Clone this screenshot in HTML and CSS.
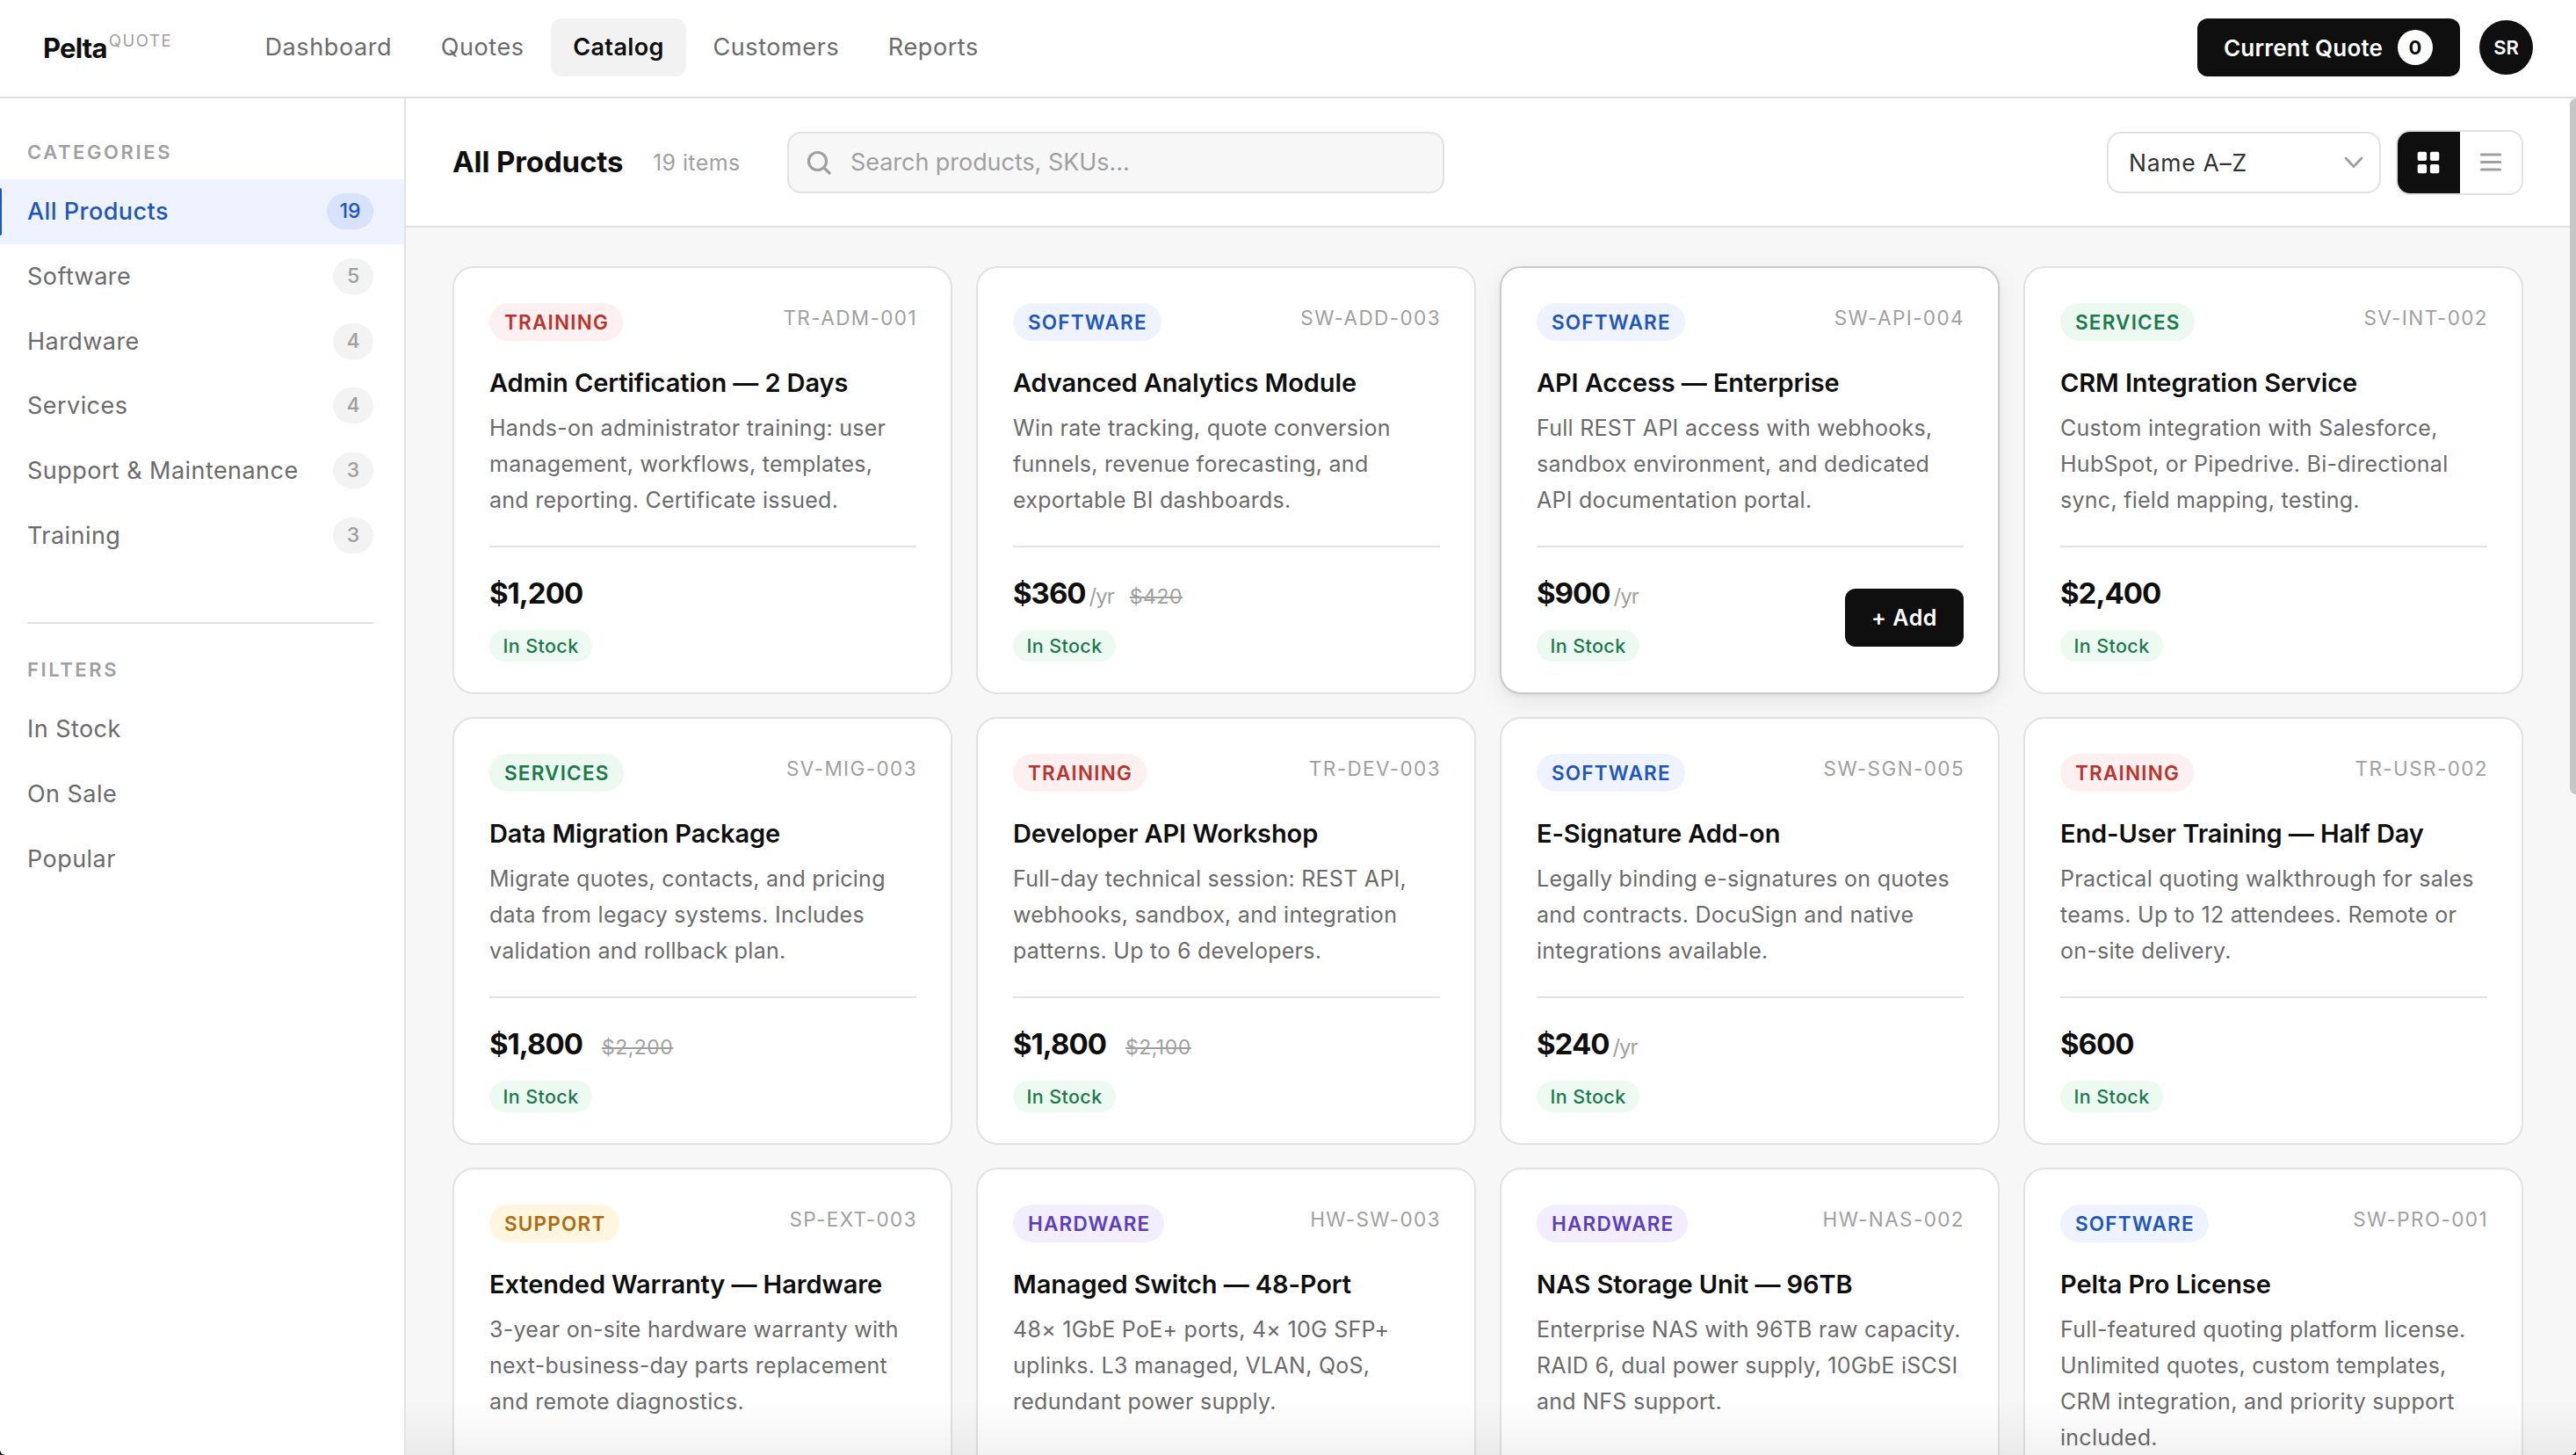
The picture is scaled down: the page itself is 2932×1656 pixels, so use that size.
FILE: index.html
```html
<!DOCTYPE html>
<html lang="en">
<head>
    <meta charset="UTF-8">
    <meta name="viewport" content="width=device-width, initial-scale=1.0">
    <title>Pelta Quote - Catalog</title>
    <link rel="stylesheet" href="styles.css">
</head>
<body>
    <div class="app">
        <header class="header">
            <div class="logo">Pelta<span class="logo-tag">QUOTE</span></div>
            <nav class="nav">
                <a class="nav-link">Dashboard</a>
                <a class="nav-link">Quotes</a>
                <a class="nav-link active">Catalog</a>
                <a class="nav-link">Customers</a>
                <a class="nav-link">Reports</a>
            </nav>
            <button class="quote-btn">Current Quote <span class="quote-count">0</span></button>
            <div class="avatar">SR</div>
        </header>

        <div class="layout">
            <aside class="sidebar">
                <h3 class="side-title">CATEGORIES</h3>
                <ul class="side-list">
                    <li class="side-item active">All Products <span class="count">19</span></li>
                    <li class="side-item">Software <span class="count">5</span></li>
                    <li class="side-item">Hardware <span class="count">4</span></li>
                    <li class="side-item">Services <span class="count">4</span></li>
                    <li class="side-item">Support &amp; Maintenance <span class="count">3</span></li>
                    <li class="side-item">Training <span class="count">3</span></li>
                </ul>
                <div class="side-divider"></div>
                <h3 class="side-title">FILTERS</h3>
                <ul class="side-list">
                    <li class="side-item">In Stock</li>
                    <li class="side-item">On Sale</li>
                    <li class="side-item">Popular</li>
                </ul>
            </aside>

            <main class="main">
                <div class="toolbar">
                    <h1 class="page-title">All Products</h1>
                    <span class="item-count">19 items</span>
                    <div class="search">
                        <svg class="search-icon" width="28" height="28" viewBox="0 0 28 28" fill="none" stroke="#a0a0a0" stroke-width="3.2" stroke-linecap="round">
                            <circle cx="12.5" cy="12.5" r="10"/>
                            <path d="M19.8 19.8L26 26"/>
                        </svg>
                        <span class="placeholder">Search products, SKUs...</span>
                    </div>
                    <div class="select">
                        <span>Name A–Z</span>
                        <svg width="22" height="14" viewBox="0 0 22 14" fill="none" stroke="#a0a0a0" stroke-width="2.8" stroke-linecap="round" stroke-linejoin="round">
                            <path d="M2 2L11 11.5L20 2"/>
                        </svg>
                    </div>
                    <div class="view-toggle">
                        <button class="view-btn active">
                            <svg width="26" height="26" viewBox="0 0 26 26" fill="#fff">
                                <rect x="0.7" y="0.7" width="10.4" height="10.4" rx="2"/>
                                <rect x="14.9" y="0.7" width="10.4" height="10.4" rx="2"/>
                                <rect x="0.7" y="14.9" width="10.4" height="10.4" rx="2"/>
                                <rect x="14.9" y="14.9" width="10.4" height="10.4" rx="2"/>
                            </svg>
                        </button>
                        <button class="view-btn">
                            <svg width="26" height="26" viewBox="0 0 26 26" stroke="#a0a0a0" stroke-width="3.2" stroke-linecap="round">
                                <path d="M2.4 4H23.6M2.4 12.5H23.6M2.4 21H23.6"/>
                            </svg>
                        </button>
                    </div>
                </div>

                <div class="grid">
                    <div class="card">
                        <div class="card-top"><span class="badge training">TRAINING</span><span class="sku">TR-ADM-001</span></div>
                        <h2 class="card-title">Admin Certification — 2 Days</h2>
                        <p class="card-desc">Hands-on administrator training: user management, workflows, templates, and reporting. Certificate issued.</p>
                        <div class="card-footer">
                            <div>
                                <div class="price-row"><span class="price">$1,200</span></div>
                                <span class="stock">In Stock</span>
                            </div>
                        </div>
                    </div>
                    <div class="card">
                        <div class="card-top"><span class="badge software">SOFTWARE</span><span class="sku">SW-ADD-003</span></div>
                        <h2 class="card-title">Advanced Analytics Module</h2>
                        <p class="card-desc">Win rate tracking, quote conversion funnels, revenue forecasting, and exportable BI dashboards.</p>
                        <div class="card-footer">
                            <div>
                                <div class="price-row"><span class="price">$360</span><span class="period">/yr</span><span class="old-price">$420</span></div>
                                <span class="stock">In Stock</span>
                            </div>
                        </div>
                    </div>
                    <div class="card hovered">
                        <div class="card-top"><span class="badge software">SOFTWARE</span><span class="sku">SW-API-004</span></div>
                        <h2 class="card-title">API Access — Enterprise</h2>
                        <p class="card-desc">Full REST API access with webhooks, sandbox environment, and dedicated API documentation portal.</p>
                        <div class="card-footer">
                            <div>
                                <div class="price-row"><span class="price">$900</span><span class="period">/yr</span></div>
                                <span class="stock">In Stock</span>
                            </div>
                            <button class="add-btn">+ Add</button>
                        </div>
                    </div>
                    <div class="card">
                        <div class="card-top"><span class="badge services">SERVICES</span><span class="sku">SV-INT-002</span></div>
                        <h2 class="card-title">CRM Integration Service</h2>
                        <p class="card-desc">Custom integration with Salesforce, HubSpot, or Pipedrive. Bi-directional sync, field mapping, testing.</p>
                        <div class="card-footer">
                            <div>
                                <div class="price-row"><span class="price">$2,400</span></div>
                                <span class="stock">In Stock</span>
                            </div>
                        </div>
                    </div>

                    <div class="card">
                        <div class="card-top"><span class="badge services">SERVICES</span><span class="sku">SV-MIG-003</span></div>
                        <h2 class="card-title">Data Migration Package</h2>
                        <p class="card-desc">Migrate quotes, contacts, and pricing data from legacy systems. Includes validation and rollback plan.</p>
                        <div class="card-footer">
                            <div>
                                <div class="price-row"><span class="price">$1,800</span><span class="old-price">$2,200</span></div>
                                <span class="stock">In Stock</span>
                            </div>
                        </div>
                    </div>
                    <div class="card">
                        <div class="card-top"><span class="badge training">TRAINING</span><span class="sku">TR-DEV-003</span></div>
                        <h2 class="card-title">Developer API Workshop</h2>
                        <p class="card-desc">Full-day technical session: REST API, webhooks, sandbox, and integration patterns. Up to 6 developers.</p>
                        <div class="card-footer">
                            <div>
                                <div class="price-row"><span class="price">$1,800</span><span class="old-price">$2,100</span></div>
                                <span class="stock">In Stock</span>
                            </div>
                        </div>
                    </div>
                    <div class="card">
                        <div class="card-top"><span class="badge software">SOFTWARE</span><span class="sku">SW-SGN-005</span></div>
                        <h2 class="card-title">E-Signature Add-on</h2>
                        <p class="card-desc">Legally binding e-signatures on quotes and contracts. DocuSign and native integrations available.</p>
                        <div class="card-footer">
                            <div>
                                <div class="price-row"><span class="price">$240</span><span class="period">/yr</span></div>
                                <span class="stock">In Stock</span>
                            </div>
                        </div>
                    </div>
                    <div class="card">
                        <div class="card-top"><span class="badge training">TRAINING</span><span class="sku">TR-USR-002</span></div>
                        <h2 class="card-title">End-User Training — Half Day</h2>
                        <p class="card-desc">Practical quoting walkthrough for sales teams. Up to 12 attendees. Remote or on-site delivery.</p>
                        <div class="card-footer">
                            <div>
                                <div class="price-row"><span class="price">$600</span></div>
                                <span class="stock">In Stock</span>
                            </div>
                        </div>
                    </div>

                    <div class="card">
                        <div class="card-top"><span class="badge support">SUPPORT</span><span class="sku">SP-EXT-003</span></div>
                        <h2 class="card-title">Extended Warranty — Hardware</h2>
                        <p class="card-desc">3-year on-site hardware warranty with next-business-day parts replacement and remote diagnostics.</p>
                    </div>
                    <div class="card">
                        <div class="card-top"><span class="badge hardware">HARDWARE</span><span class="sku">HW-SW-003</span></div>
                        <h2 class="card-title">Managed Switch — 48-Port</h2>
                        <p class="card-desc">48× 1GbE PoE+ ports, 4× 10G SFP+ uplinks. L3 managed, VLAN, QoS, redundant power supply.</p>
                    </div>
                    <div class="card">
                        <div class="card-top"><span class="badge hardware">HARDWARE</span><span class="sku">HW-NAS-002</span></div>
                        <h2 class="card-title">NAS Storage Unit — 96TB</h2>
                        <p class="card-desc">Enterprise NAS with 96TB raw capacity. RAID 6, dual power supply, 10GbE iSCSI and NFS support.</p>
                    </div>
                    <div class="card">
                        <div class="card-top"><span class="badge software">SOFTWARE</span><span class="sku">SW-PRO-001</span></div>
                        <h2 class="card-title">Pelta Pro License</h2>
                        <p class="card-desc">Full-featured quoting platform license. Unlimited quotes, custom templates, CRM integration, and priority support included.</p>
                    </div>
                </div>
                <div class="scrollbar"></div>
                <div class="fade"></div>
            </main>
        </div>
    </div>
</body>
</html>
```
FILE: styles.css
```css
* {
    box-sizing: border-box;
    margin: 0;
    padding: 0;
}
html {
    background: #111;
}
body {
    font-family: Inter, sans-serif;
    color: #0f0f0f;
}
button {
    font-family: inherit;
    border: none;
}
.app {
    display: flex;
    flex-direction: column;
    height: 1656px;
    background: #fff;
    border-radius: 0 0 6px 6px;
    overflow: hidden;
}

/* header */
.header {
    display: flex;
    align-items: center;
    flex: none;
    height: 112px;
    padding: 0 49px 2px 49px;
    border-bottom: 2px solid #e2e2e2;
}
.logo {
    display: flex;
    width: 227px;
    font-size: 31px;
    font-weight: 700;
    letter-spacing: -0.8px;
}
.logo-tag {
    margin-left: 2px;
    font-size: 18.5px;
    line-height: 20px;
    font-weight: 400;
    letter-spacing: 1.6px;
    color: #a0a0a0;
}
.nav {
    display: flex;
    gap: 5px;
    flex: 1;
}
.nav-link {
    padding: 0 25px 0 25.5px;
    font-size: 27px;
    line-height: 66px;
    letter-spacing: 0.6px;
    color: #6b6b6b;
    border-radius: 12px;
}
.nav-link.active {
    background: #f2f2f2;
    color: #0f0f0f;
    font-weight: 600;
    letter-spacing: 0.4px;
}
.quote-btn {
    display: flex;
    align-items: center;
    justify-content: space-between;
    width: 299px;
    height: 66px;
    padding: 0 31px 0 30px;
    background: #0f0f0f;
    border-radius: 12px;
    color: #fff;
    font-size: 26px;
    font-weight: 600;
    letter-spacing: 0.2px;
}
.quote-count {
    width: 40px;
    height: 40px;
    border-radius: 50%;
    background: #fff;
    color: #0f0f0f;
    font-size: 22px;
    font-weight: 700;
    line-height: 40px;
    text-align: center;
}
.avatar {
    width: 61px;
    height: 62px;
    margin-left: 22px;
    border-radius: 50%;
    background: #0f0f0f;
    color: #fff;
    font-size: 22px;
    font-weight: 600;
    line-height: 62px;
    text-align: center;
}

.layout {
    display: flex;
    flex: 1;
    min-height: 0;
}

/* sidebar */
.sidebar {
    flex: none;
    width: 462px;
    padding-top: 46px;
    border-right: 2px solid #e2e2e2;
}
.side-title {
    margin: 0 31px 16px;
    font-size: 22px;
    line-height: 30px;
    font-weight: 600;
    letter-spacing: 2.6px;
    color: #a0a0a0;
}
.side-list {
    list-style: none;
}
.side-item {
    display: flex;
    align-items: center;
    justify-content: space-between;
    height: 73.7px;
    padding: 0 35px 0 31px;
    font-size: 27px;
    letter-spacing: 0.45px;
    color: #6b6b6b;
}
.side-item.active {
    padding-left: 0;
    background: #eef3ff;
    color: #1d56c2;
    font-weight: 500;
}
.side-item.active::before {
    content: "";
    width: 2px;
    height: 54px;
    margin-right: 29px;
    background: #1d56c2;
    border-radius: 0 2px 2px 0;
}
.count {
    min-width: 46px;
    height: 41px;
    padding: 0 11px;
    border-radius: 21px;
    background: #f3f3f3;
    color: #a0a0a0;
    font-size: 23px;
    font-weight: 500;
    line-height: 41px;
    letter-spacing: 0;
    text-align: center;
}
.active .count {
    min-width: 53px;
    margin-left: auto;
    background: #d8e2fa;
    color: #1d56c2;
}
.side-divider {
    height: 2px;
    margin: 62px 35px 37px 31px;
    background: #e2e2e2;
}

/* toolbar */
.main {
    position: relative;
    flex: 1;
    background: #f7f7f7;
}
.toolbar {
    display: flex;
    align-items: center;
    height: 147px;
    padding: 0 60px 0 53px;
    background: #fff;
    border-bottom: 2px solid #e2e2e2;
}
.page-title {
    width: 228px;
    padding-bottom: 2px;
    font-size: 33px;
    font-weight: 700;
    letter-spacing: -0.1px;
    white-space: nowrap;
}
.item-count {
    width: 153px;
    font-size: 25px;
    letter-spacing: 0.4px;
    color: #a0a0a0;
}
.search {
    display: flex;
    align-items: center;
    width: 748px;
    height: 70px;
    margin-right: auto;
    padding-left: 20px;
    background: #f7f7f7;
    border: 2px solid #e2e2e2;
    border-radius: 16px;
}
.search-icon {
    margin-right: 22px;
}
.placeholder {
    font-size: 27px;
    letter-spacing: -0.05px;
    color: #a0a0a0;
}
.select {
    display: flex;
    align-items: center;
    justify-content: space-between;
    width: 312px;
    height: 70px;
    margin-right: 17px;
    padding: 0 18px 0 23px;
    border: 2px solid #e2e2e2;
    border-radius: 16px;
    background: #fff;
    color: #333;
    font-size: 26.5px;
    letter-spacing: 0.7px;
}
.view-toggle {
    display: flex;
    width: 145px;
    height: 74px;
    border: 2px solid #e2e2e2;
    border-radius: 16px;
    overflow: hidden;
}
.view-btn {
    display: flex;
    align-items: center;
    justify-content: center;
    flex: 1;
    background: #fff;
}
.view-btn.active {
    background: #0f0f0f;
}

/* product cards */
.grid {
    display: grid;
    grid-template-columns: repeat(4, 569px);
    grid-auto-rows: 487px;
    gap: 26px 27px;
    padding: 44px 0 0 53px;
    height: 1397px;
    overflow: hidden;
}
.card {
    display: flex;
    flex-direction: column;
    padding: 40px 39px 0 40px;
    background: #fff;
    border: 2px solid #e2e2e2;
    border-radius: 24px;
}
.card.hovered {
    border-color: #cacaca;
    box-shadow: 0 8px 28px rgba(0, 0, 0, 0.07), 0 2px 4px rgba(0, 0, 0, 0.06);
}
.card-top {
    display: flex;
    justify-content: space-between;
    align-items: flex-start;
    margin-bottom: 28px;
}
.badge {
    padding: 0 16px 0 17px;
    border-radius: 22px;
    font-size: 22.5px;
    font-weight: 600;
    line-height: 43px;
    letter-spacing: 1.2px;
}
.training {
    background: #fdf0f0;
    color: #c0302b;
}
.software {
    background: #eef3ff;
    color: #1d56c2;
}
.services {
    background: #ecf9f1;
    color: #1b7a4b;
}
.support {
    background: #fff6e0;
    color: #b4690e;
}
.hardware {
    background: #f2eefe;
    color: #5b3cc4;
}
.sku {
    margin-right: -1px;
    font-size: 22.5px;
    line-height: 34px;
    letter-spacing: 1.4px;
    color: #a0a0a0;
}
.card-title {
    font-size: 29px;
    line-height: 39px;
    font-weight: 600;
    letter-spacing: -0.1px;
    white-space: nowrap;
}
.card-desc {
    margin-top: 12px;
    font-size: 25px;
    line-height: 41.1px;
    letter-spacing: 0.27px;
    color: #6b6b6b;
}
.card-footer {
    display: flex;
    align-items: center;
    justify-content: space-between;
    margin-top: 30.5px;
    padding-top: 30px;
    border-top: 2px solid #e2e2e2;
}
.price-row {
    display: flex;
    align-items: baseline;
    height: 44px;
    margin-bottom: 20px;
}
.price {
    font-size: 33px;
    line-height: 44px;
    font-weight: 700;
    letter-spacing: -1px;
}
.period {
    margin-left: 4px;
    font-size: 24px;
    letter-spacing: -1px;
    color: #a0a0a0;
}
.old-price {
    margin-left: 18px;
    font-size: 23px;
    letter-spacing: 0.5px;
    color: #a0a0a0;
    text-decoration: line-through;
}
.price + .old-price {
    margin-left: 22px;
}
.stock {
    display: block;
    width: 117px;
    height: 36px;
    border-radius: 18px;
    background: #ecfaf2;
    color: #1b7a4b;
    font-size: 21.5px;
    font-weight: 500;
    line-height: 36px;
    letter-spacing: 0.4px;
    text-align: center;
}
.add-btn {
    width: 135px;
    height: 66px;
    border-radius: 12px;
    background: #0f0f0f;
    color: #fff;
    font-size: 25px;
    font-weight: 600;
    letter-spacing: 0.6px;
}

/* overlays on top of the scrolling list */
.scrollbar {
    position: absolute;
    top: 0;
    right: 0;
    width: 7px;
    height: 792px;
    background: #c6c6c6;
    border-radius: 7px 0 0 7px;
}
.fade {
    position: absolute;
    left: 0;
    right: 0;
    bottom: 0;
    height: 64px;
    background: linear-gradient(rgba(0, 0, 0, 0), rgba(0, 0, 0, 0.05));
}
```
